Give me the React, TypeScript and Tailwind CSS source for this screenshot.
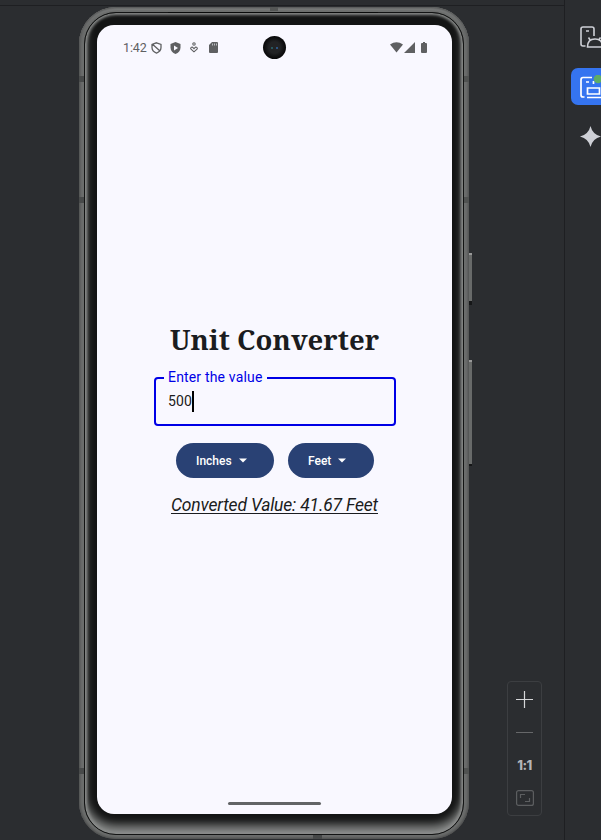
import React from "react";

function StatusBar() {
  return (
    <div className="relative flex h-[45px] w-full items-center pl-[26px] pr-[24px] text-[#5f6062]">
      <span className="mt-[2px] w-[28px] whitespace-nowrap text-[12.5px] leading-none tracking-[-0.1px]">1:42</span>
      <svg className="mt-px h-[12px] w-[11px]" viewBox="0 0 11 12" fill="none" stroke="currentColor" strokeWidth="1.3">
        <path d="M5.500 .8 10 2.400v3.200c0 2.500-1.800 4.500-4.500 5.500C2.800 10.100 1 8.100 1 5.600V2.400ZM1.500 2.300 9 9" />
      </svg>
      <svg className="ml-[8px] mt-px h-[12px] w-[11px]" viewBox="0 0 11 12">
        <path d="M5.500 0 10.500 2v3.800c0 2.700-2 5.100-5 6.200-3-1.100-5-3.500-5-6.200V2Z" fill="currentColor" />
        <path d="m4 3.500 4 2.500-4 2.500Z" fill="#f9f8ff" />
      </svg>
      <svg className="ml-[9px] h-[11px] w-[8px]" viewBox="0 0 8 11" fill="none" stroke="currentColor" strokeWidth="1.100">
        <circle cx="4" cy="2" r="1.200" />
        <path d="M4 9.800 1 7.200c-1-1.500 1-3 2-1.500l1 1 1-1c1-1.500 3 0 2 1.500Z" />
      </svg>
      <svg className="ml-[11px] h-[11px] w-[9px]" viewBox="0 0 9 11">
        <path d="M3 0h5q1 0 1 1v9q0 1-1 1H1q-1 0-1-1V3Z" fill="currentColor" />
        <path d="M3.500 1.500v2M5.500 1.500v2M7.500 1.500v2" stroke="#f9f8ff" strokeWidth=".6" />
      </svg>
      <svg className="ml-auto h-[11px] w-[38px]" viewBox="0 0 38 11" fill="currentColor">
        <path d="M0 2.500Q6.500-2 13 2.500L6.500 10.500ZM25 0v11H14ZM33 1V0h2v1h1q1 0 1 1v8q0 1-1 1h-4q-1 0-1-1V2q0-1 1-1Z" />
      </svg>
      <div className="absolute left-[166px] top-[11px] flex size-[23px] items-center justify-center gap-[3px] rounded-full bg-[radial-gradient(circle,#222325_35%,#0b0b0c_65%)]">
        <i className="size-[2px] rounded-full bg-[#286a70]" />
        <i className="size-[2px] rounded-full bg-[#3265a0]" />
      </div>
    </div>
  );
}

function UnitButton({ label, className }: { label: string; className: string }) {
  return (
    <button className={`flex h-[35px] items-center rounded-full bg-[#294174] pl-[20px] text-[12px] font-medium text-white ${className}`}>
      {label}
      <svg className="ml-[7px] h-[5px] w-[8px]" viewBox="0 0 8 5" fill="white">
        <path d="M0 .5h8L4 4.500Z" />
      </svg>
    </button>
  );
}

function Screen() {
  return (
    <div className="flex h-[789px] w-[355px] flex-col overflow-hidden rounded-[17px] bg-[#f9f8ff] font-[Roboto,sans-serif] text-[#1b1c20]">
      <StatusBar />
      <h1 className="mt-[252px] ml-[73px] h-[36px] whitespace-nowrap font-['Noto_Serif','DejaVu_Serif',serif] text-[27.500px] leading-[36px] font-bold tracking-[0.05px]">Unit Converter</h1>
      <fieldset className="ml-[57px] mt-[13px] h-[55px] w-[242px] rounded-[4px] border-2 border-[#0000e6] px-[8px]">
        <legend className="h-[14px] px-[4px] text-[14px] leading-[12px] tracking-[0.17px] text-[#0000e6]">Enter the value</legend>
        <div className="flex h-[32px] items-center pl-[4px] text-[14px] tracking-[0.1px]">
          500<i className="h-[21px] w-[2px] bg-black" />
        </div>
      </fieldset>
      <div className="ml-[79px] mt-[17px] flex gap-[14px]">
        <UnitButton label="Inches" className="w-[98px]" />
        <UnitButton label="Feet" className="w-[86px]" />
      </div>
      <p className="ml-[74px] mt-[15px] h-[24px] whitespace-nowrap text-[17.500px] leading-[24px] tracking-[-0.19px] italic underline decoration-1 underline-offset-2">Converted Value: 41.67 Feet</p>
      <div className="mt-auto mb-[9px] ml-[131px] h-[3px] w-[93px] rounded-full bg-[#626466]" />
    </div>
  );
}

function Phone() {
  return (
    <div className="relative mt-[1px] ml-[79px] h-[832px] w-[390px] rounded-[37px] bg-[#6c6e6d] pt-[5px] pl-[5px] shadow-[inset_0_0_3px_1px_#484949,inset_0_3px_2px_#858787]">
      <div className="h-[823px] w-[380px] rounded-[32px] border border-[#121313] bg-[#131414] pt-[12px] pl-[12px] shadow-[inset_0_0_3px_2px_#8a8c8b,inset_0_-9px_10px_#858786]">
        <Screen />
      </div>
      <i className="absolute top-0 left-[191px] h-[4px] w-[8px] bg-[#545655]" />
      <i className="absolute top-[5px] left-[89px] h-px w-[210px] rounded-full bg-[#090a0a]" />
      <i className="absolute top-[69px] left-0 h-[6px] w-[5px] bg-[#484a4a]" />
      <i className="absolute top-[190px] left-0 h-[6px] w-[5px] bg-[#484a4a]" />
      <i className="absolute top-[69px] right-0 h-[6px] w-[5px] bg-[#505251]" />
      <i className="absolute top-[190px] right-0 h-[6px] w-[5px] bg-[#505251]" />
      <i className="absolute bottom-[65px] left-0 h-[6px] w-[5px] bg-[#484a4a]" />
      <i className="absolute right-0 bottom-[65px] h-[6px] w-[5px] bg-[#505251]" />
      <i className="absolute bottom-0 left-[234px] h-[4px] w-[9px] bg-[#464848]" />
      <i className="absolute top-[246px] left-[390px] h-[52px] w-[3px] border-t-2 border-b-4 border-t-[#999] border-b-[#151617] bg-[#686a69]" />
      <i className="absolute top-[353px] left-[390px] h-[106px] w-[3px] border-t-2 border-b-2 border-t-[#999] border-b-[#151617] bg-[#686a69]" />
    </div>
  );
}

function ZoomControls() {
  return (
    <div className="mb-[24px] ml-[38px] flex h-[135px] w-[35px] flex-col items-center self-end rounded-[4px] border border-[#3c3e41] text-[#d5d6d8]">
      <svg className="mt-[9px] h-[17px] w-[17px]" viewBox="0 0 17 17" stroke="currentColor" strokeWidth="1.200"><path d="M0 8.500h17M8.500 0v17" /></svg>
      <div className="mt-[24px] h-px w-[17px] bg-[#666769]" />
      <span className="mt-[24px] h-[16px] font-[Inter,sans-serif] text-[13px] leading-[16px] font-extrabold tracking-[-0.5px] text-[#b4b5b7]">1:1</span>
      <svg className="mt-[17px] h-[16px] w-[18px]" viewBox="0 0 18 16" fill="none" stroke="#5c5e60" strokeWidth="1.200"><rect x=".6" y=".6" width="16.800" height="14.800" rx="2" /><path d="M4.500 8V4.500H9M9 11.500h4.500V8" /></svg>
    </div>
  );
}

function ToolRail() {
  return (
    <aside className="h-full w-[36px] overflow-hidden pl-[6px] text-[#ced0d6]">
      <svg className="mt-[26px] ml-[9px] h-[23px] w-[24px]" viewBox="0 0 24 23" fill="none" stroke="currentColor" strokeWidth="1.600">
        <path d="M5.500 20H3Q1 20 1 18V3Q1 1 3 1h9Q14 1 14 3v7M6 5h3M7.500 21q0-8 7.500-8t7.500 8ZM8.500 11.500l2 3M20.500 11.500l-2 3" />
      </svg>
      <div className="mt-[19px] h-[37px] w-[37px] rounded-[7px] bg-[#3574f0] pt-[7px] pl-[9px]">
        <svg className="h-[24px] w-[24px]" viewBox="0 0 24 24" fill="none" stroke="white" strokeWidth="1.700">
          <path d="M4.500 22H3Q1 22 1 20V5Q1 2.500 3 2.500h9M6 7h3M13.500 6v3M7.500 13h12v6h-12ZM7 22.500h14" />
          <circle cx="18" cy="4" r="4.300" fill="#5fad65" stroke="none" />
        </svg>
      </div>
      <svg className="mt-[21px] ml-[9px] h-[22px] w-[22px]" viewBox="0 0 22 22" fill="currentColor"><path d="M10.500 0q2 8.500 10.500 10.500-8.500 2-10.500 10.500Q8.500 12.500 0 10.500 8.500 8.500 10.500 0Z" /></svg>
    </aside>
  );
}

export default function App() {
  return (
    <div className="flex h-[840px] w-[601px] overflow-hidden bg-[#2b2d30]">
      <main className="h-full w-[565px] shrink-0 border-r border-[#1e1f22]">
        <div className="h-[6px] border-b border-[#1e1f22]" />
        <div className="flex h-[834px]">
          <Phone />
          <ZoomControls />
        </div>
      </main>
      <ToolRail />
    </div>
  );
}
